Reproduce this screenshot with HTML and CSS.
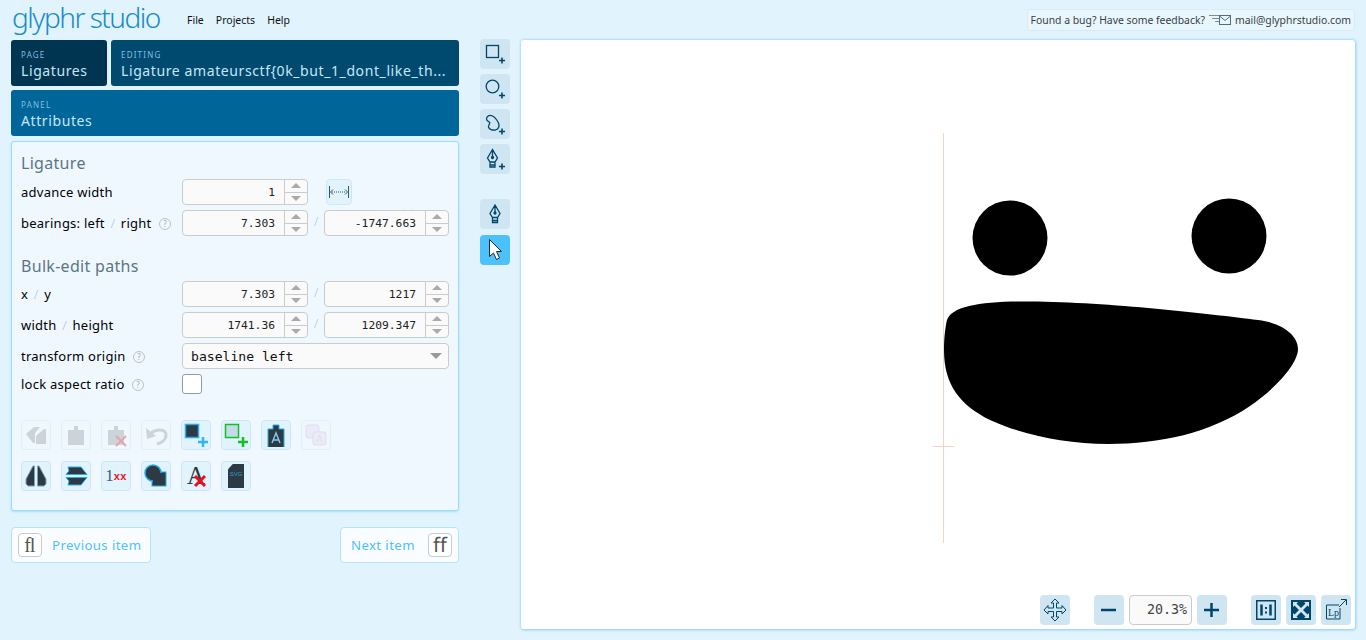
FILE: index.html
```html
<!DOCTYPE html>
<html lang="en">
<head>
    <meta charset="UTF-8">
    <meta name="viewport" content="width=device-width, initial-scale=1.0">
    <title>Glyphr Studio</title>
    <link rel="stylesheet" href="styles.css">
</head>
<body>
    <header class="topbar">
        <div class="logo">glyphr studio</div>
        <nav class="menu">
            <span>File</span>
            <span>Projects</span>
            <span>Help</span>
        </nav>
        <div class="feedback">
            <span>Found a bug? Have some feedback?</span>
            <svg class="mail-icon" width="22" height="12" viewBox="0 0 22 12" fill="none" stroke="#7a8d98">
                <path d="M0 1.500h10M3 4.500h7M6 7.500h4"/>
                <rect x="10.500" y="1.500" width="11" height="9" stroke="#51707f"/>
                <path d="M10.500 2l5.500 4.500L21.500 2" stroke="#51707f"/>
            </svg>
            <span>mail@glyphrstudio.com</span>
        </div>
    </header>

    <div class="workspace">
        <section class="left-col">
            <div class="nav-row">
                <div class="tile tile-page">
                    <div class="tile-label">PAGE</div>
                    <div class="tile-title">Ligatures</div>
                </div>
                <div class="tile tile-editing">
                    <div class="tile-label">EDITING</div>
                    <div class="tile-title">Ligature amateursctf{0k_but_1_dont_like_th...</div>
                </div>
            </div>
            <div class="tile tile-panel">
                <div class="tile-label">PANEL</div>
                <div class="tile-title">Attributes</div>
            </div>

            <div class="panel">
                <h2 class="panel-head">Ligature</h2>
                <div class="form-row">
                    <div class="field-label">advance width</div>
                    <div class="num-field"><span class="num-value">1</span><span class="spin"><i class="up"></i><i class="down"></i></span></div>
                    <div class="lock-cell">
                        <button class="width-btn">
                            <svg width="20" height="12" viewBox="0 0 20 12" fill="none" stroke="#34566a">
                                <path d="M.5 0v12M19.500 0v12"/>
                                <path d="M3 6h14" stroke-dasharray="1 1"/>
                                <path d="M4 3.500L1.500 6 4 8.500M16 3.500L18.500 6 16 8.500"/>
                            </svg>
                        </button>
                    </div>
                </div>
                <div class="form-row">
                    <div class="field-label">bearings: left <em>/</em> right <span class="help">?</span></div>
                    <div class="num-field"><span class="num-value">7.303</span><span class="spin"><i class="up"></i><i class="down"></i></span></div>
                    <em class="sep">/</em>
                    <div class="num-field num-right"><span class="num-value">-1747.663</span><span class="spin"><i class="up"></i><i class="down"></i></span></div>
                </div>

                <h2 class="panel-head bulk-head">Bulk-edit paths</h2>
                <div class="form-row">
                    <div class="field-label">x <em>/</em> y</div>
                    <div class="num-field"><span class="num-value">7.303</span><span class="spin"><i class="up"></i><i class="down"></i></span></div>
                    <em class="sep">/</em>
                    <div class="num-field num-right"><span class="num-value">1217</span><span class="spin"><i class="up"></i><i class="down"></i></span></div>
                </div>
                <div class="form-row">
                    <div class="field-label">width <em>/</em> height</div>
                    <div class="num-field"><span class="num-value">1741.36</span><span class="spin"><i class="up"></i><i class="down"></i></span></div>
                    <em class="sep">/</em>
                    <div class="num-field num-right"><span class="num-value">1209.347</span><span class="spin"><i class="up"></i><i class="down"></i></span></div>
                </div>
                <div class="form-row">
                    <div class="field-label">transform origin <span class="help">?</span></div>
                    <div class="select-field"><span>baseline left</span><i class="caret"></i></div>
                </div>
                <div class="form-row check-row">
                    <div class="field-label">lock aspect ratio <span class="help">?</span></div>
                    <div class="checkbox"></div>
                </div>

                <div class="action-grid">
                    <button class="action off">
                        <svg width="24" height="24" viewBox="0 0 24 24" fill="#a4a9ad"><path d="M2 11l8-7h6l-5 6v10H9z"/><path d="M13 12l7-6h2v15H12v-8z"/></svg>
                    </button>
                    <button class="action off">
                        <svg width="24" height="24" viewBox="0 0 24 24" fill="#a4a9ad"><path d="M4 7h6V3h4v4h6v15H4z"/></svg>
                    </button>
                    <button class="action off">
                        <svg width="24" height="24" viewBox="0 0 24 24" fill="#a4a9ad"><path d="M4 7h6V3h4v4h6v15H4z"/><path d="M12 13l10 10M22 13L12 23" stroke="#e04040" stroke-width="2"/></svg>
                    </button>
                    <button class="action off">
                        <svg width="24" height="24" viewBox="0 0 24 24" fill="none" stroke="#a4a9ad" stroke-width="3"><path d="M6 11c5-5 16-6 16 1 0 5-5 8-9 9"/><path d="M2 5l1 11 9-3z" fill="#a4a9ad" stroke="none"/></svg>
                    </button>
                    <button class="action">
                        <svg width="24" height="24" viewBox="0 0 24 24"><rect x="1.500" y="1.500" width="13" height="13" fill="#2c3a44" stroke="#2aa9ec" stroke-width="1.500"/><path d="M14 19h10M19 14v10" stroke="#2fb4f5" stroke-width="2.500"/></svg>
                    </button>
                    <button class="action">
                        <svg width="24" height="24" viewBox="0 0 24 24"><rect x="1.500" y="1.500" width="13" height="13" fill="#c3dbe8" stroke="#17bf26" stroke-width="1.500"/><path d="M14 19h10M19 14v10" stroke="#17bf26" stroke-width="2.500"/></svg>
                    </button>
                    <button class="action">
                        <svg width="24" height="24" viewBox="0 0 24 24"><path d="M4 6h5V2h6v4h5v20H4z" fill="#2c3a44" stroke="#2aa9ec"/><path d="M8 20l4-10 4 10M9.500 17h5" fill="none" stroke="#7cc9ee" stroke-width="1.500"/></svg>
                    </button>
                    <button class="action off">
                        <svg width="24" height="24" viewBox="0 0 24 24" fill="#e4dcef" stroke="#c9bcdd"><rect x="2" y="2" width="13" height="13" rx="2"/><rect x="9" y="9" width="13" height="13" rx="2"/><path d="M13 19l2.500-7 2.500 7" fill="none"/></svg>
                    </button>
                    <button class="action">
                        <svg width="24" height="24" viewBox="0 0 24 24" fill="#2c3a44" stroke="#7ea3b6"><path d="M9 2h1.500v20H4l-2-2v-5z"/><path d="M15 2h-1.500v20H20l2-2v-5z"/></svg>
                    </button>
                    <button class="action">
                        <svg width="24" height="24" viewBox="0 0 24 24" fill="#2c3a44" stroke="#2aa9ec"><path d="M4 3h13l6 7.500H2l3-3.500z"/><path d="M23 13.500l-6 7.500H4l1-4-3-3.500z"/></svg>
                    </button>
                    <button class="action glyph-btn"><span class="lx-one">1</span><span class="lx-x">xx</span></button>
                    <button class="action">
                        <svg width="24" height="24" viewBox="0 0 24 24"><rect x="8" y="8" width="14" height="14" fill="#2c3a44" stroke="#2aa9ec"/><circle cx="9" cy="9" r="8" fill="#2c3a44" stroke="#2aa9ec" stroke-width="1.500"/><path d="M9 9h12v12H9z" fill="#2c3a44"/></svg>
                    </button>
                    <button class="action glyph-btn"><span class="clear-a">A</span>
                        <svg class="clear-x" width="14" height="14" viewBox="0 0 14 14" stroke="#e8101c" stroke-width="3"><path d="M2 2l10 10M12 2L2 12"/></svg>
                    </button>
                    <button class="action glyph-btn"><span class="svg-doc">SVG</span></button>
                </div>
            </div>

            <div class="pager">
                <button class="pager-btn">
                    <span class="key">ﬂ</span>
                    <span>Previous item</span>
                </button>
                <button class="pager-btn">
                    <span>Next item</span>
                    <span class="key">ﬀ</span>
                </button>
            </div>
        </section>

        <aside class="tools">
            <button class="tool">
                <svg width="24" height="24" viewBox="0 0 24 24" fill="none" stroke="#00466b" stroke-width="1.300"><rect x="3.500" y="3.500" width="12" height="12"/><path d="M16 18.500h6M19 15.500v6" stroke-width="1.600"/></svg>
            </button>
            <button class="tool">
                <svg width="24" height="24" viewBox="0 0 24 24" fill="none" stroke="#00466b" stroke-width="1.300"><circle cx="9.500" cy="9.500" r="6.300"/><path d="M16 18.500h6M19 15.500v6" stroke-width="1.600"/></svg>
            </button>
            <button class="tool">
                <svg width="24" height="24" viewBox="0 0 24 24" fill="none" stroke="#00466b" stroke-width="1.300"><path d="M3.500 7c0-3 3-4.500 6-3 3 1.500 4.500 4 6 7 1.200 3 .5 6-3 7-3 .5-6.500-.5-7-3-.3-2 1.500-2.500 1.200-4.500C6.500 9.500 3.500 9.500 3.500 7z"/><path d="M16 19.500h6M19 16.500v6" stroke-width="1.600"/></svg>
            </button>
            <button class="tool">
                <svg width="24" height="24" viewBox="0 0 24 24" fill="none" stroke="#00466b" stroke-width="1.300"><path d="M9.500 2.500L4.500 11l2.500 4h5l2.500-4zM7 15v5h5v-5M7 18h5M9.500 2.500v7"/><circle cx="9.500" cy="10.500" r="1" fill="#00466b"/><path d="M16 19.500h6M19 16.500v6" stroke-width="1.600"/></svg>
            </button>
            <button class="tool pen-tool">
                <svg width="24" height="24" viewBox="0 0 24 24" fill="none" stroke="#00466b" stroke-width="1.300"><path d="M12 3l-5 8.500 2.500 4h5l2.500-4zM9.500 15.500v5h5v-5M9.500 18.500h5M12 3v7"/><circle cx="12" cy="11" r="1" fill="#00466b"/></svg>
            </button>
            <button class="tool tool-on">
                <svg width="24" height="24" viewBox="0 0 24 24" fill="#fff" stroke="#1d2d38"><path d="M6.500 1.500v17l4-3.500 3 6.500 3-1.500-3-6.500h5z"/></svg>
            </button>
        </aside>

        <main class="canvas">
            <svg class="glyph-art" viewBox="521 40 834 589">
                <path d="M943.500 133v410M933 446.500h21" stroke="#f2d3c6" fill="none"/>
                <circle cx="1010" cy="238" r="37.500"/>
                <circle cx="1229" cy="236" r="37.500"/>
                <path d="M946.700 321C951 305 985 301 1030 301.500C1110 302 1210 314 1258 320C1282 323 1298 335 1298 349C1298 362 1280 385 1250 406C1210 433 1160 444 1108 444C1065 444 1020 434 990 420C960 405 944 385 944 350C944 338 945 330 946.700 321Z"/>
            </svg>

            <div class="view-controls">
                <button class="tool">
                    <svg width="24" height="24" viewBox="0 0 24 24" fill="none" stroke="#00466b"><path d="M12 1l4 4h-2.500v5H19V7.500l4 4.500-4 4v-2.500h-5.500V19H16l-4 4-4-4h2.500v-5.500H5V16l-4-4 4-4.500V10h5.500V5H8z"/></svg>
                </button>
                <button class="tool zoom-minus">
                    <svg width="20" height="20" viewBox="0 0 20 20" stroke="#00466b" stroke-width="2.500"><path d="M2 10h15"/></svg>
                </button>
                <div class="zoom-value">20.3%</div>
                <button class="tool">
                    <svg width="20" height="20" viewBox="0 0 20 20" stroke="#00466b" stroke-width="2.500"><path d="M2 10h15M9.500 3v14"/></svg>
                </button>
                <button class="tool view-one">
                    <svg width="20" height="20" viewBox="0 0 20 20" fill="none" stroke="#00466b"><rect x=".75" y=".75" width="18.500" height="18.500" stroke-width="1.500"/><path d="M5.500 4.500v11M14.500 4.500v11" stroke-width="2.500"/><path d="M10 7v2M10 11.500v2" stroke-width="2"/></svg>
                </button>
                <button class="tool">
                    <svg width="22" height="22" viewBox="0 0 22 22"><rect x="1" y="1" width="20" height="20" fill="#00466b"/><path d="M3 3h5L6.500 4.500 11 9l4.500-4.500L14 3h5v5l-1.500-1.500L13 11l4.500 4.500L19 14v5h-5l1.500-1.500L11 13l-4.500 4.500L8 19H3v-5l1.500 1.500L9 11 4.500 6.500 3 8z" fill="#d0e7f3"/></svg>
                </button>
                <button class="tool">
                    <svg width="24" height="24" viewBox="0 0 24 24" fill="none" stroke="#00466b"><path d="M15 7H2.500v14H16V10"/><path d="M15 9l7-7M17 1.500h5.500V7"/><text x="4" y="17.500" class="lp-text">Lp</text></svg>
                </button>
            </div>
        </main>
    </div>
</body>
</html>
```

FILE: styles.css
```css
* {
    box-sizing: border-box;
}
body {
    font-family: "Noto Sans", Arial, sans-serif;
    font-size: 14px;
    background-color: #e1f3fc;
    color: #111;
    margin: 0;
    padding: 0;
    height: 640px;
    overflow: hidden;
}
button {
    font-family: inherit;
    padding: 0;
    cursor: pointer;
}

/* top bar */
.topbar {
    display: flex;
    align-items: center;
    height: 40px;
    padding: 0 11px 4px 12px;
}
.logo {
    font-family: "Noto Sans", sans-serif;
    font-weight: 300;
    font-size: 28px;
    letter-spacing: -1.5px;
    color: #1a8cc6;
    width: 175px;
    margin-top: -3px;
    white-space: nowrap;
}
.menu {
    display: flex;
    gap: 12px;
    font-size: 10.5px;
    margin-top: 4px;
}
.feedback {
    display: flex;
    align-items: center;
    margin-left: auto;
    margin-top: 4px;
    height: 22px;
    padding: 0 3px;
    font-size: 10.4px;
    color: #333f47;
    background-color: #eaf6fd;
    border: 1px solid #d5ebf7;
    border-radius: 3px;
    white-space: nowrap;
}
.mail-icon {
    margin: 0 4px;
}

/* layout */
.workspace {
    display: flex;
    padding-left: 11px;
}
.left-col {
    width: 448px;
    flex: none;
}
.tools {
    width: 30px;
    margin: -1px 11px 0 21px;
    display: flex;
    flex-direction: column;
    gap: 5px;
    flex: none;
}
.canvas {
    position: relative;
    width: 834px;
    height: 589px;
    background-color: #fff;
    border-radius: 3px;
    box-shadow: 0 0 3px #7fcdf5, 1px 1px 3px #a5d9f2;
}
.glyph-art {
    position: absolute;
    inset: 0;
    width: 834px;
    height: 589px;
}

/* nav tiles */
.nav-row {
    display: flex;
    gap: 4px;
    margin-bottom: 4px;
}
.tile {
    height: 46px;
    padding: 10px 10px;
    color: #c6e6f7;
    border-radius: 3px;
}
.tile-page {
    width: 96px;
    background-color: #003551;
}
.tile-editing {
    flex: 1;
    background-color: #004a70;
}
.tile-panel {
    background-color: #006699;
}
.tile-label {
    font-size: 8px;
    line-height: 10px;
    letter-spacing: 1.2px;
    color: #7fbfe0;
}
.tile-title {
    font-size: 14px;
    line-height: 21px;
    letter-spacing: .6px;
    white-space: nowrap;
}

/* attributes panel */
.panel {
    height: 370px;
    margin-top: 5px;
    padding: 10px 9px;
    background-color: #f0f8ff;
    border: 1px solid #9adcfb;
    border-radius: 3px;
    box-shadow: 0 1px 2px #a8dffa;
}
.panel-head {
    margin: 0 0 5px 0;
    font-size: 16px;
    line-height: 22px;
    font-weight: normal;
    letter-spacing: .3px;
    color: #5b7584;
}
.bulk-head {
    margin-top: 19px;
    margin-bottom: 4px;
}
.form-row {
    display: flex;
    align-items: center;
    height: 26px;
    margin-bottom: 5px;
}
.check-row {
    height: 20px;
    margin-top: 5px;
}
.field-label {
    width: 161px;
    flex: none;
    font-size: 13px;
    letter-spacing: .25px;
    white-space: nowrap;
    color: #000;
}
.field-label em,
.sep {
    font-style: normal;
    font-weight: 300;
    color: #9ccbe3;
    margin: 0 2px;
}
.sep {
    width: 16px;
    margin: -4px 0 0 0;
    text-align: center;
    font-size: 12px;
}
.help {
    display: inline-block;
    width: 12px;
    height: 12px;
    margin-left: 4px;
    font-size: 8px;
    line-height: 10px;
    text-align: center;
    color: #a5adb2;
    border: 1px solid #bcc3c7;
    border-radius: 50%;
    vertical-align: 1px;
}
.num-field {
    display: flex;
    width: 126px;
    height: 26px;
    flex: none;
    background-color: #fafafa;
    border: 1px solid #c9cccd;
    border-radius: 4px;
}
.num-right {
    width: 125px;
}
.num-value {
    flex: 1;
    padding-right: 9px;
    font-family: "DejaVu Sans Mono", monospace;
    font-size: 11.3px;
    line-height: 26px;
    text-align: right;
    color: #222;
}
.spin {
    display: flex;
    flex-direction: column;
    width: 23px;
    border-left: 1px solid #c9cccd;
}
.spin i {
    flex: 1;
    display: flex;
    align-items: center;
    justify-content: center;
}
.spin .up {
    border-bottom: 1px solid #c9cccd;
}
.spin .up::after,
.spin .down::after {
    content: "";
    border-left: 5px solid transparent;
    border-right: 5px solid transparent;
}
.spin .up::after {
    border-bottom: 5px solid #aaa;
}
.spin .down::after {
    border-top: 5px solid #aaa;
}
.lock-cell {
    margin-left: 18px;
}
.width-btn {
    display: flex;
    align-items: center;
    justify-content: center;
    width: 26px;
    height: 26px;
    background-color: #e1f3fc;
    border: 1px solid #cde8f6;
    border-radius: 4px;
}
.select-field {
    display: flex;
    align-items: center;
    justify-content: space-between;
    width: 267px;
    height: 26px;
    padding: 0 6px 0 8px;
    font-family: "DejaVu Sans Mono", monospace;
    font-size: 13.1px;
    background-color: #fafafa;
    border: 1px solid #c9cccd;
    border-radius: 4px;
}
.caret {
    border-left: 6px solid transparent;
    border-right: 6px solid transparent;
    border-top: 6px solid #999;
}
.checkbox {
    width: 20px;
    height: 20px;
    background-color: #fff;
    border: 1px solid #999;
    border-radius: 3px;
}

/* action buttons */
.action-grid {
    display: grid;
    grid-template-columns: repeat(8, 30px);
    gap: 11px 10px;
    margin-top: 26px;
}
.action {
    position: relative;
    display: flex;
    align-items: center;
    justify-content: center;
    width: 30px;
    height: 30px;
    background-color: #e1f3fc;
    border: 1px solid #cde6f4;
    border-radius: 4px;
}
.action.off {
    background-color: #f0f8ff;
    border-color: #e2eff8;
}
.action.off svg {
    opacity: .45;
}
.lx-one {
    font-family: "Liberation Serif", serif;
    font-size: 17px;
    color: #44606f;
}
.lx-x {
    font-family: "Liberation Sans", sans-serif;
    font-size: 11px;
    font-weight: bold;
    color: #e8101c;
    letter-spacing: .5px;
}
.clear-a {
    font-family: "Liberation Serif", serif;
    font-size: 25px;
    line-height: 26px;
    color: #2c3a44;
}
.clear-x {
    position: absolute;
    right: 3px;
    bottom: 2px;
}
.svg-doc {
    display: block;
    width: 16px;
    height: 24px;
    padding-top: 7px;
    font-family: "Liberation Sans", sans-serif;
    font-size: 6px;
    text-align: center;
    color: #2a9fd9;
    background-color: #2c3a44;
    clip-path: polygon(30% 0, 100% 0, 100% 100%, 0 100%, 0 22%);
}

/* previous / next */
.pager {
    display: flex;
    justify-content: space-between;
    margin-top: 16px;
}
.pager-btn {
    display: flex;
    align-items: center;
    height: 36px;
    padding: 0 6px;
    gap: 10px;
    font-size: 13.2px;
    letter-spacing: .4px;
    color: #4dc1fb;
    background-color: #fafdff;
    border: 1px solid #b5e3f9;
    border-radius: 4px;
    white-space: nowrap;
}
.pager-btn:first-child {
    width: 140px;
}
.pager-btn:last-child {
    width: 119px;
    justify-content: space-between;
    padding-left: 10px;
}
.key {
    display: inline-block;
    width: 24px;
    height: 24px;
    font-family: "Liberation Serif", serif;
    font-size: 20px;
    line-height: 22px;
    text-align: center;
    color: #555;
    background-color: #fff;
    border: 1px solid #c9cccd;
    border-radius: 4px;
}

/* canvas tools */
.tool {
    display: flex;
    align-items: center;
    justify-content: center;
    width: 30px;
    height: 30px;
    flex: none;
    background-color: #cfe6f2;
    border: none;
    border-radius: 4px;
}
.pen-tool {
    margin-top: 20px;
}
.tool-on {
    background-color: #4dc1fb;
    margin-top: 1px;
}
.view-controls {
    position: absolute;
    right: 4px;
    bottom: 4px;
    display: flex;
    align-items: center;
    gap: 5px;
}
.zoom-minus {
    margin-left: 19px;
}
.view-one {
    margin-left: 19px;
}
.zoom-value {
    width: 63px;
    height: 30px;
    padding-right: 4px;
    font-family: "DejaVu Sans Mono", monospace;
    font-size: 13.3px;
    line-height: 28px;
    text-align: right;
    color: #444;
    background-color: #fafafa;
    border: 1px solid #c9cccd;
    border-radius: 4px;
}
.lp-text {
    font-family: "Liberation Serif", serif;
    font-size: 10px;
    fill: #00466b;
    stroke: none;
}
```
